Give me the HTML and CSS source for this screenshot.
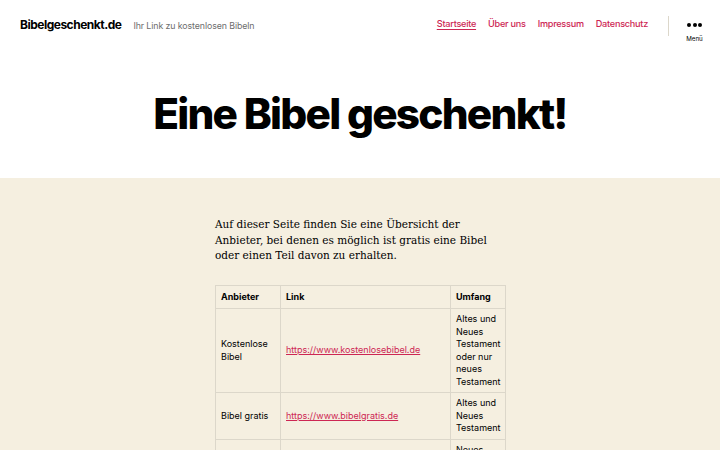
FILE: index.html
```html
<!DOCTYPE html>
<html lang="de">
<head>
<meta charset="utf-8">
<title>Bibelgeschenkt.de</title>
<link rel="stylesheet" href="styles.css">
</head>
<body>
<header class="site-header">
  <div class="branding">
    <a class="site-title" href="#">Bibelgeschenkt.de</a>
    <span class="site-desc">Ihr Link zu kostenlosen Bibeln</span>
  </div>
  <div class="header-right">
    <nav class="primary-nav">
      <a class="current" href="#">Startseite</a>
      <a href="#">Über uns</a>
      <a href="#">Impressum</a>
      <a href="#">Datenschutz</a>
    </nav>
    <div class="menu-toggle">
      <span class="dots"><i></i><i></i><i></i></span>
      <span class="menu-label">Menü</span>
    </div>
  </div>
</header>
<section class="entry-header">
  <h1>Eine Bibel geschenkt!</h1>
</section>
<main class="entry-content">
  <div class="inner">
    <p>Auf dieser Seite finden Sie eine Übersicht der Anbieter, bei denen es möglich ist gratis eine Bibel oder einen Teil davon zu erhalten.</p>
    <table>
      <colgroup><col class="c1"><col class="c2"><col class="c3"></colgroup>
      <thead>
        <tr><th>Anbieter</th><th>Link</th><th>Umfang</th></tr>
      </thead>
      <tbody>
        <tr><td>Kostenlose Bibel</td><td><a href="#">https://www.kostenlosebibel.de</a></td><td>Altes und Neues Testament oder nur neues Testament</td></tr>
        <tr><td>Bibel gratis</td><td><a href="#">https://www.bibelgratis.de</a></td><td>Altes und Neues Testament</td></tr>
        <tr><td>Bibel online</td><td><a href="#">https://www.bibel.de</a></td><td>Neues Testament</td></tr>
      </tbody>
    </table>
  </div>
</main>
</body>
</html>
```
FILE: styles.css
```css
html, body { margin: 0; padding: 0; }
body {
  background: #fff;
  color: #000;
  font-family: Inter, "Liberation Sans", sans-serif;
  width: 720px;
  height: 450px;
  overflow: hidden;
}
a { color: #cd2653; }

.site-header {
  display: flex;
  justify-content: space-between;
  align-items: flex-start;
  height: 50px;
  padding: 0 20px;
}
.branding {
  display: flex;
  align-items: baseline;
  gap: 12px;
  padding-top: 17px;
}
.site-title {
  font-weight: 700;
  font-size: 12px;
  letter-spacing: -0.0415em;
  color: #000;
  text-decoration: none;
}
.site-desc {
  font-size: 8.8px;
  color: #6d6d6d;
  letter-spacing: -0.01em;
}
.header-right {
  display: flex;
  align-items: flex-start;
  margin-right: -20px;
}
.primary-nav {
  display: flex;
  gap: 12px;
  padding-top: 18px;
  padding-right: 20px;
  font-size: 9.15px;
  font-weight: 500;
  letter-spacing: -0.0277em;
}
.primary-nav a { text-decoration: none; }
.primary-nav a.current { text-decoration: underline; text-underline-offset: 2px; }
.menu-toggle {
  margin-top: 16px;
  border-left: 1px solid #dcd7ca;
  width: 51px;
  height: 20px;
  display: flex;
  flex-direction: column;
  align-items: center;
}
.dots {
  display: flex;
  gap: 1.6px;
  margin-top: 7px;
}
.dots i {
  width: 4px;
  height: 4px;
  border-radius: 50%;
  background: #000;
}
.menu-label {
  font-size: 6.2px;
  color: #000;
  margin-top: 8px;
}

.entry-header {
  height: 128px;
  display: flex;
  align-items: center;
  justify-content: center;
}
.entry-header h1 {
  margin: 0;
  font-size: 42.3px;
  font-weight: 800;
  letter-spacing: -0.0415em;
  line-height: 1.1;
}

.entry-content {
  background: #f5efe0;
  min-height: 272px;
  padding-top: 39px;
}
.inner {
  width: 290px;
  margin: 0 auto;
}
.inner p {
  margin: 0 0 21px;
  font-family: "DejaVu Serif", serif;
  font-size: 10.5px;
  line-height: 15.5px;
}
table {
  border-collapse: collapse;
  width: 290px;
  font-size: 9px;
  line-height: 12.5px;
  table-layout: fixed;
}
col.c1 { width: 65px; }
col.c2 { width: 170px; }
col.c3 { width: 55px; }
th, td {
  border: 1px solid #dcd7ca;
  padding: 4px 5px;
  text-align: left;
  vertical-align: middle;
}
th { font-weight: 700; padding: 5px 5px; }
td a { text-decoration: underline; }
```
